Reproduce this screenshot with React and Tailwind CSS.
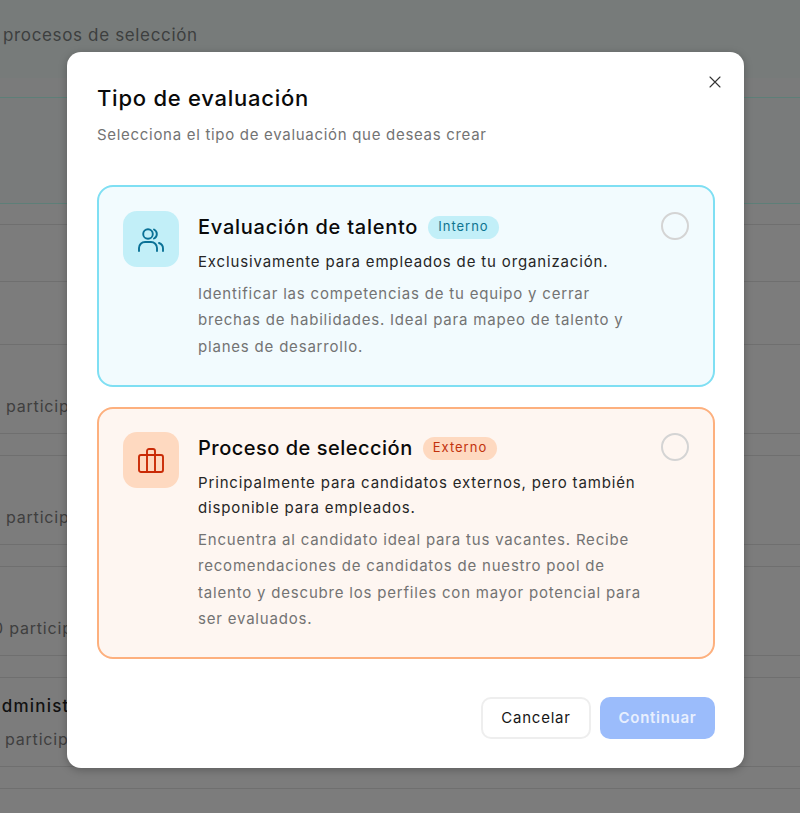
import React from 'react';

const participantRows = [
  { label: 'participantes', ml: 'ml-[6px]' },
  { label: 'participantes', ml: 'ml-[6px]' },
  { label: '0 participantes', ml: '-ml-[7px]' },
  { label: 'participantes', ml: 'ml-[5px]', name: 'administración' },
];

function UsersIcon() {
  return (
    <svg className="mt-[1px]" width="26" height="24" viewBox="0 0 26 24" fill="none" stroke="#0a7196" strokeWidth="1.900" strokeLinecap="round" strokeLinejoin="round">
      <circle cx="10" cy="6" r="4.800" />
      <path d="M1 23v-3a6 6 0 0 1 6-6h6a6 6 0 0 1 6 6v3" />
      <path d="M16 1.500a5 5 0 0 1 0 9" />
      <path d="M21 15a6 6 0 0 1 4 6v2" />
    </svg>
  );
}

function BriefcaseIcon() {
  return (
    <svg width="26" height="25" viewBox="0 0 26 25" fill="none" stroke="#c92a06" strokeWidth="1.900" strokeLinecap="round" strokeLinejoin="round">
      <rect x="1" y="7" width="24" height="17" rx="2" />
      <path d="M9 24V3a2 2 0 0 1 2-2h4a2 2 0 0 1 2 2v21" />
    </svg>
  );
}

function OptionCard({ tone, icon, title, badge, lead, body }) {
  const isBlue = tone === 'blue';
  return (
    <div className={`flex rounded-[16px] border-2 px-[24px] ${isBlue ? 'h-[202px] border-[#7fdff3] bg-[#f2fbfe] pt-[24px]' : 'h-[252px] border-[#fdb07e] bg-[#fef6f1] pt-[23px]'}`}>
      <div className={`flex h-[56px] w-[56px] shrink-0 items-center justify-center rounded-[14px] ${isBlue ? 'bg-[#c2eff8]' : 'bg-[#fed9c0]'}`}>
        {icon}
      </div>
      <div className="ml-[19px] mt-[1px] w-[446px] shrink-0">
        <div className="flex h-[30px] items-center">
          <h3 className={`text-[20px] font-medium text-[#0a0a0a] ${isBlue ? 'tracking-[0.75px]' : 'tracking-[0.5px]'}`}>{title}</h3>
          <span className={`ml-[10px] flex h-[23px] items-center rounded-full px-[10px] text-[13px] tracking-[1px] ${isBlue ? 'bg-[#c2eff8] text-[#0e7490]' : 'bg-[#fed9c0] text-[#c2320c]'}`}>{badge}</span>
        </div>
        <p className="mt-[6.500px] text-[15px] leading-[25px] tracking-[0.85px] text-[#262626]">{lead}</p>
        <p className="mt-[7px] text-[15px] leading-[26.500px] tracking-[0.8px] text-[#737373]">{body}</p>
      </div>
      <div className="ml-auto mt-[1px] h-[28px] w-[28px] shrink-0 rounded-full border-2 border-[#d4d4d4]" />
    </div>
  );
}

export default function App() {
  return (
    <div className="relative h-[813px] w-[800px] overflow-hidden bg-[#7c7c7c] font-['Inter',sans-serif]">
      {/* page behind the overlay */}
      <div className="h-[78px] bg-[#777b7a] pl-[3px] pt-[23px] text-[17px] tracking-[0.65px] text-[#3d3f3f]">procesos de selección</div>
      <div className="h-[19px] bg-[#7a7b7b]" />
      <div className="h-[107px] border-y border-[#5d7f78] bg-[#797b7b]" />
      <div className="h-[21px] border-b border-[#6f6f6f]" />
      <div className="h-[57px] border-b border-[#6f6f6f]" />
      <div className="h-[63px] border-b border-[#6f6f6f]" />
      {participantRows.map((r, i) => (
        <div key={i} className="h-[111px] border-b border-[#6f6f6f]">
          <div className="relative h-[89px] overflow-hidden whitespace-nowrap border-b border-[#6f6f6f]">
            {r.name && <div className="absolute -left-[9px] top-[17px] text-[17px] font-medium leading-[22px] tracking-[1.200px] text-[#111]">{r.name}</div>}
            <div className={`absolute left-0 top-[50px] ${r.ml} text-[16px] leading-[22px] tracking-[0.8px] text-[#3f3f3f]`}>{r.label}</div>
          </div>
        </div>
      ))}

      {/* modal */}
      <div className="absolute left-[67px] top-[52px] h-[716px] w-[677px] rounded-[14px] bg-white pl-[30px] pr-[29px] shadow-[0_2px_8px_rgba(0,0,0,0.25)]">
        <button className="absolute right-[21px] top-[22px] text-[#333]">
          <svg width="16" height="16" viewBox="0 0 16 16" fill="none" stroke="currentColor" strokeWidth="1.100" strokeLinecap="round">
            <path d="M3 3l10 10M13 3L3 13" />
          </svg>
        </button>
        <h2 className="pt-[31px] text-[22px] font-medium leading-[30px] tracking-[0.75px] text-[#0a0a0a]">Tipo de evaluación</h2>
        <p className="mt-[11px] text-[15px] leading-[22px] tracking-[0.7px] text-[#737373]">Selecciona el tipo de evaluación que deseas crear</p>
        <div className="mt-[39px] flex flex-col gap-[20px]">
          <OptionCard
            tone="blue"
            icon={<UsersIcon />}
            title="Evaluación de talento"
            badge="Interno"
            lead="Exclusivamente para empleados de tu organización."
            body="Identificar las competencias de tu equipo y cerrar brechas de habilidades. Ideal para mapeo de talento y planes de desarrollo."
          />
          <OptionCard
            tone="orange"
            icon={<BriefcaseIcon />}
            title="Proceso de selección"
            badge="Externo"
            lead="Principalmente para candidatos externos, pero también disponible para empleados."
            body="Encuentra al candidato ideal para tus vacantes. Recibe recomendaciones de candidatos de nuestro pool de talento y descubre los perfiles con mayor potencial para ser evaluados."
          />
        </div>
        <div className="mt-[38px] flex justify-end gap-[9px]">
          <button className="h-[42px] w-[110px] rounded-[10px] border-2 border-[#eeeeee] bg-white text-[15px] tracking-[0.75px] text-[#171717]">Cancelar</button>
          <button className="h-[42px] w-[115px] rounded-[10px] bg-[#9bbcfb] text-[15px] font-semibold tracking-[0.7px] text-[#e8effe]">Continuar</button>
        </div>
      </div>
    </div>
  );
}
